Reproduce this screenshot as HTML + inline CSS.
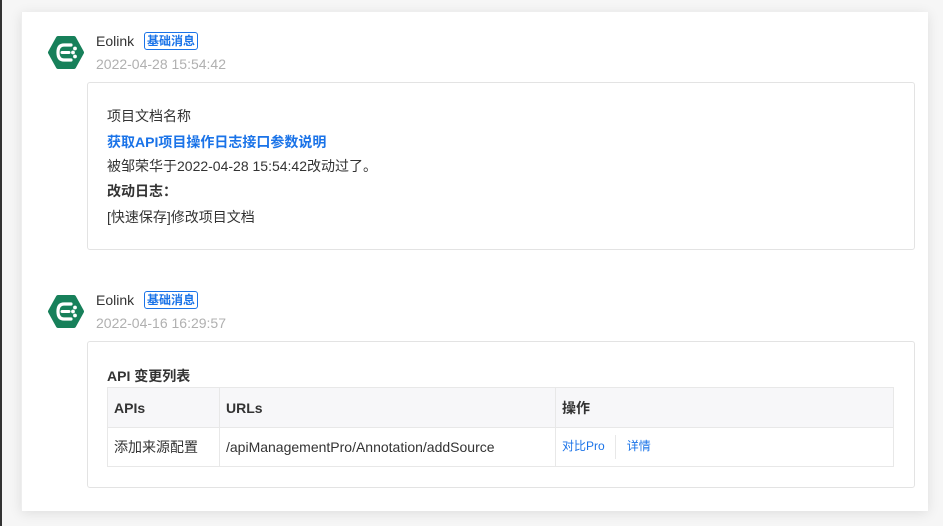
<!DOCTYPE html><html><head><meta charset="utf-8"><style>
body{margin:0;width:943px;height:526px;background:#f6f6f6;position:relative;overflow:hidden;font-family:"Liberation Sans","Noto Sans CJK SC",sans-serif;color:#333;font-size:14px}
.edge{position:absolute;left:0;top:0;width:2px;height:526px;background:#333}
.card{position:absolute;left:21px;top:12px;width:906px;height:499px;background:#fff;box-shadow:0 2px 12px rgba(0,0,0,.1);border-left:1px solid #eee}
.abs{position:absolute;white-space:nowrap}
.name{font-size:14px;color:#333}
.badge{position:absolute;border:1px solid #1a73e8;border-radius:3px;color:#1a73e8;font-size:12px;font-weight:bold;padding:0 2px;line-height:16px}
.date{color:#b0b0b0;font-size:14px}
.box{position:absolute;border:1px solid #e3e3e3;border-radius:3px;background:#fff}
.blue{color:#1a73e8}
table{position:absolute;border-collapse:collapse;font-size:14px}
td{border:1px solid #e8e8e8;padding:0 6px}
</style></head><body>
<div class="edge"></div>
<div class="card"></div>
<svg class="abs" style="left:48px;top:36px" width="36" height="33" viewBox="0 0 36 33"><polygon points="10,2 26,2 34,16.5 26,31 10,31 2,16.5" fill="#17805a" stroke="#17805a" stroke-linejoin="round" stroke-width="4"/><path d="M23 9H16Q10 9 10 16.5Q10 24 16 24H23" fill="none" stroke="#fff" stroke-width="3.2" stroke-linecap="round"/><path d="M14 16.5H21" stroke="#fff" stroke-width="3" stroke-linecap="round"/><circle cx="27" cy="12.5" r="1.9" fill="#fff"/><circle cx="27" cy="20.5" r="1.9" fill="#fff"/><circle cx="25" cy="16.5" r="1.9" fill="#fff"/></svg>
<div class="abs name" style="left:96px;top:33px">Eolink</div>
<div class="badge" style="left:144px;top:32px">基础消息</div>
<div class="abs date" style="left:96px;top:56px">2022-04-28 15:54:42</div>
<div class="box" style="left:87px;top:82px;width:826px;height:166px"></div>
<div class="abs" style="left:107px;top:106px">项目文档名称</div>
<div class="abs blue" style="left:107px;top:132px;font-weight:bold">获取API项目操作日志接口参数说明</div>
<div class="abs" style="left:107px;top:156px">被邹荣华于2022-04-28 15:54:42改动过了。</div>
<div class="abs" style="left:107px;top:181px;font-weight:bold">改动日志：</div>
<div class="abs" style="left:107px;top:207px">[快速保存]修改项目文档</div>

<svg class="abs" style="left:48px;top:295px" width="36" height="33" viewBox="0 0 36 33"><polygon points="10,2 26,2 34,16.5 26,31 10,31 2,16.5" fill="#17805a" stroke="#17805a" stroke-linejoin="round" stroke-width="4"/><path d="M23 9H16Q10 9 10 16.5Q10 24 16 24H23" fill="none" stroke="#fff" stroke-width="3.2" stroke-linecap="round"/><path d="M14 16.5H21" stroke="#fff" stroke-width="3" stroke-linecap="round"/><circle cx="27" cy="12.5" r="1.9" fill="#fff"/><circle cx="27" cy="20.5" r="1.9" fill="#fff"/><circle cx="25" cy="16.5" r="1.9" fill="#fff"/></svg>
<div class="abs name" style="left:96px;top:292px">Eolink</div>
<div class="badge" style="left:144px;top:291px">基础消息</div>
<div class="abs date" style="left:96px;top:315px">2022-04-16 16:29:57</div>
<div class="box" style="left:87px;top:341px;width:826px;height:145px"></div>
<div class="abs" style="left:107px;top:366px;font-weight:bold">API 变更列表</div>
<table style="left:107px;top:387px;width:787px">
<tr style="height:40px;background:#f7f7f9;font-weight:bold"><td style="width:99px">APIs</td><td style="width:323px">URLs</td><td>操作</td></tr>
<tr style="height:39px;background:#fff"><td>添加来源配置</td><td>/apiManagementPro/Annotation/addSource</td><td style="font-size:12px"><span class="blue">对比Pro</span><span style="display:inline-block;width:1px;height:24px;background:#e8e8e8;vertical-align:middle;margin:0 11px 0 10px"></span><span class="blue">详情</span></td></tr>
</table>
</body></html>
